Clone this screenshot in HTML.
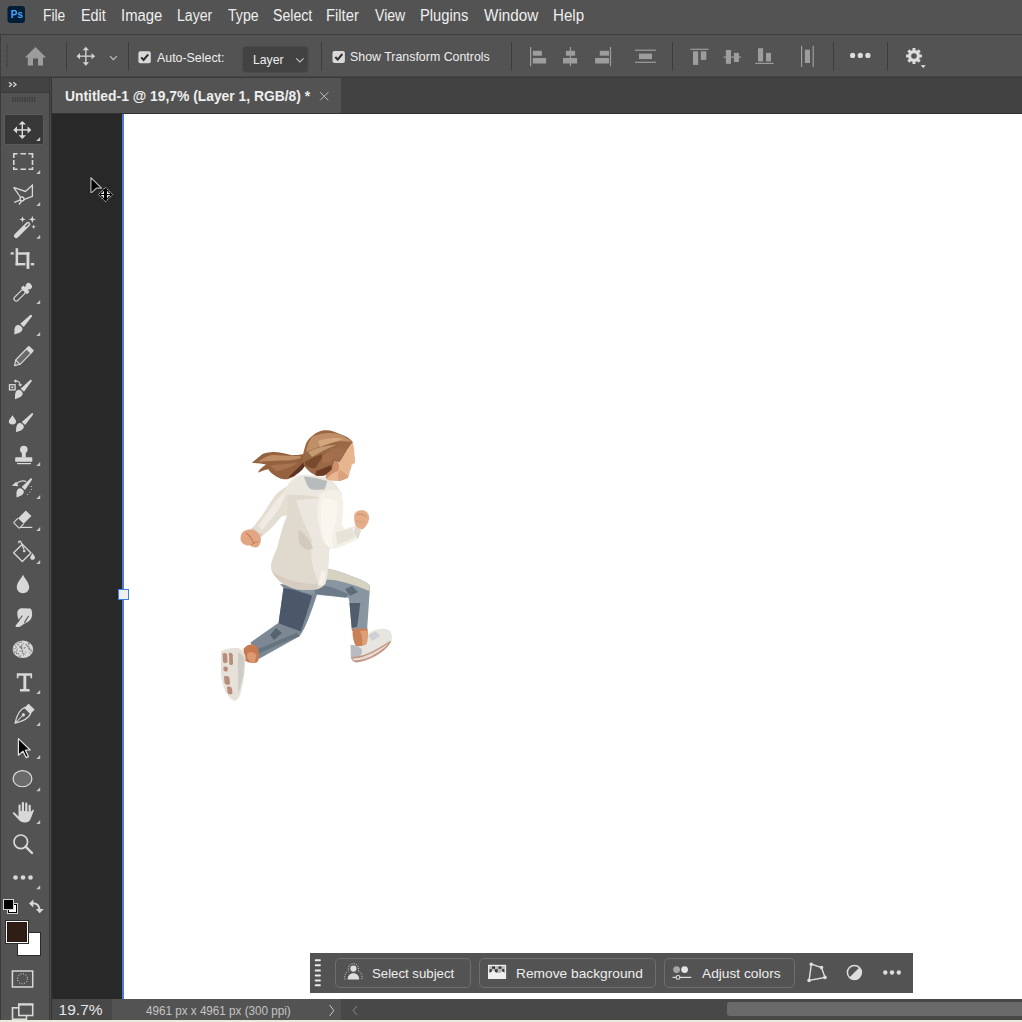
<!DOCTYPE html>
<html><head><meta charset="utf-8">
<style>
*{margin:0;padding:0;box-sizing:border-box}
html,body{width:1022px;height:1022px;overflow:hidden;background:#535353;font-family:"Liberation Sans",sans-serif}
.a{position:absolute}
.t{position:absolute;white-space:nowrap;color:#e8e8e8;line-height:1}
.t{transform-origin:0 0}
</style></head><body>
<!-- menu bar -->
<div class="a" style="left:0;top:0;width:1022px;height:34px;background:#535353"></div>
<div class="a" style="left:0;top:34px;width:1022px;height:1px;background:#3e3e3e"></div>
<!-- options bar -->
<div class="a" style="left:0;top:35px;width:1022px;height:42px;background:#535353"></div>
<div class="a" style="left:0;top:35px;width:1px;height:42px;background:#3e3e3e"></div>
<div class="a" style="left:0;top:76px;width:1022px;height:1px;background:#474747"></div><div class="a" style="left:0;top:77px;width:1022px;height:1px;background:#393939"></div>
<!-- tools panel -->
<div class="a" style="left:0;top:78px;width:49px;height:942px;background:#535353"></div>
<div class="a" style="left:1px;top:78px;width:48px;height:14px;background:#434343"></div>
<div class="a" style="left:1px;top:92px;width:48px;height:1px;background:#3a3a3a"></div>
<div class="a" style="left:0;top:78px;width:1px;height:942px;background:#3a3a3a"></div>
<div class="a" style="left:49px;top:78px;width:1px;height:942px;background:#3a3a3a"></div><div class="a" style="left:50px;top:78px;width:1px;height:942px;background:#494949"></div><div class="a" style="left:51px;top:78px;width:1px;height:942px;background:#343434"></div>
<!-- move tool selected -->
<div class="a" style="left:4px;top:114px;width:40px;height:31px;background:#383838;border:1px solid #5a5a5a;border-radius:2px"></div>
<!-- tab bar -->
<div class="a" style="left:52px;top:78px;width:970px;height:35px;background:#424242"></div>
<div class="a" style="left:52px;top:78px;width:289px;height:35px;background:#535353"></div>
<div class="a" style="left:52px;top:113px;width:970px;height:1px;background:#323232"></div>
<!-- pasteboard + canvas -->
<div class="a" style="left:52px;top:114px;width:970px;height:885px;background:#282828"></div>
<div class="a" style="left:124px;top:114px;width:898px;height:885px;background:#ffffff"></div>
<div class="a" style="left:122px;top:114px;width:2px;height:885px;background:#4a7bd6"></div>
<div class="a" style="left:118px;top:589px;width:11px;height:11px;background:#efefef;border:1.5px solid #3f7ee8"></div>
<!-- status bar -->
<div class="a" style="left:52px;top:999px;width:970px;height:21px;background:#535353"></div>
<div class="a" style="left:52px;top:999px;width:60px;height:21px;background:#484848"></div>
<div class="a" style="left:341px;top:999px;width:681px;height:21px;background:#484848"></div>
<div class="a" style="left:727px;top:1002px;width:305px;height:14px;background:#6a6a6a;border-radius:3px"></div>
<div class="a" style="left:0;top:1020px;width:1022px;height:2px;background:#e9ecdc"></div>
<!-- floating taskbar -->
<div class="a" style="left:310px;top:953px;width:603px;height:40px;background:#535353"></div>
<div class="a" style="left:335px;top:958px;width:136px;height:30px;border:1px solid #6e6e6e;border-radius:5px"></div>
<div class="a" style="left:479px;top:958px;width:177px;height:30px;border:1px solid #6e6e6e;border-radius:5px"></div>
<div class="a" style="left:664px;top:958px;width:131px;height:30px;border:1px solid #6e6e6e;border-radius:5px"></div>


<svg class="a" style="left:0;top:0" width="1022" height="1022" viewBox="0 0 1022 1022">
<!-- Ps logo -->
<rect x="7.5" y="6" width="17.5" height="17" rx="3.2" fill="#001e36"/>
<text x="10.8" y="17.9" font-family="Liberation Sans" font-weight="bold" font-size="10" fill="#4aa6f8">Ps</text>
<!-- options grip -->
<line x1="7" y1="44" x2="7" y2="67.5" stroke="#3c3c3c" stroke-width="1.3" stroke-dasharray="1.4 1.1"/>
<!-- home -->
<path d="M25 57.5 L35.5 47 L46 57.5 Z M27.8 57 H43 V65.4 H38 V58.5 H33 V65.4 H27.8 Z" fill="#9c9c9c"/>
<!-- separators -->
<g stroke="#3d3d3d" stroke-width="1">
<line x1="66.5" y1="42" x2="66.5" y2="71"/>
<line x1="128.5" y1="42" x2="128.5" y2="71"/>
<line x1="321.5" y1="42" x2="321.5" y2="71"/>
<line x1="511.5" y1="42" x2="511.5" y2="71"/>
<line x1="672.5" y1="42" x2="672.5" y2="71"/>
<line x1="833.5" y1="42" x2="833.5" y2="71"/>
<line x1="887.5" y1="42" x2="887.5" y2="71"/>
</g>
<!-- move icon options -->
<g fill="#d4d4d4" stroke="none">
<rect x="85.2" y="49" width="1.3" height="14.5"/>
<rect x="79" y="55.5" width="14.5" height="1.3"/>
<path d="M85.85 46.7 L89 50.2 H82.7 Z M85.85 65.8 L89 62.3 H82.7 Z M76.5 56.15 L80 53 V59.3 Z M95.1 56.15 L91.6 53 V59.3 Z"/>
</g>
<polyline points="110,56.2 113.4,59.6 116.8,56.2" fill="none" stroke="#c4c4c4" stroke-width="1.1"/>
<!-- checkboxes -->
<rect x="138.4" y="51.3" width="12.4" height="12" rx="2" fill="#d9d9d9"/>
<polyline points="141.2,57.4 143.6,60 148.2,54.4" fill="none" stroke="#2d2d2d" stroke-width="2"/>
<rect x="332.5" y="50.9" width="12.4" height="12" rx="2" fill="#d9d9d9"/>
<polyline points="335.3,57 337.7,59.6 342.3,54" fill="none" stroke="#2d2d2d" stroke-width="2"/>
<!-- dropdown -->
<rect x="242.6" y="46.4" width="65.4" height="25.8" rx="3" fill="#424242" stroke="#4b4b4b" stroke-width="1"/>
<polyline points="296.2,58.4 299.9,61.9 303.6,58.4" fill="none" stroke="#c8c8c8" stroke-width="1.1"/>
<!-- align icons -->
<g fill="#9d9d9d">
<rect x="530" y="47" width="1.2" height="19.2"/><rect x="532.8" y="50.8" width="9.1" height="4.9"/><rect x="532.8" y="58" width="13.3" height="5.5"/>
<rect x="569.8" y="47" width="1.2" height="19.2"/><rect x="565.9" y="50.8" width="9.2" height="4.9"/><rect x="563" y="58" width="14.1" height="5.5"/>
<rect x="609.9" y="47" width="1.2" height="19.2"/><rect x="599.8" y="50.8" width="9.2" height="4.9"/><rect x="595.1" y="58" width="13.9" height="5.5"/>
<rect x="635" y="49.6" width="20.9" height="1.2"/><rect x="635" y="61.7" width="20.9" height="1.2"/><rect x="639" y="53.6" width="13" height="5.5"/>
<rect x="690.4" y="48.7" width="18" height="1.2"/><rect x="693" y="51.3" width="5.2" height="13.6"/><rect x="700.8" y="51.3" width="5.5" height="8.6"/>
<rect x="723.5" y="56.5" width="17.7" height="1.2"/><rect x="725.9" y="50" width="5.1" height="13.8"/><rect x="733.9" y="52.9" width="5" height="9.1"/>
<rect x="755.3" y="62.8" width="18.3" height="1.2"/><rect x="758" y="48.2" width="5.1" height="13.3"/><rect x="766" y="52.9" width="5" height="8.6"/>
<rect x="801" y="45.8" width="1.2" height="21.2"/><rect x="812.6" y="45.8" width="1.2" height="21.2"/><rect x="804.9" y="49.7" width="5.1" height="13.3"/>
</g>
<!-- more dots -->
<g fill="#dcdcdc"><circle cx="852.6" cy="55.4" r="2.6"/><circle cx="860.3" cy="55.4" r="2.6"/><circle cx="867.9" cy="55.4" r="2.6"/></g>
<!-- gear -->
<g transform="translate(914 56)" fill="#dcdcdc">
<path id="gear" d="M-1.45 -5.82 L-1.55 -7.95 L1.55 -7.95 L1.45 -5.82 L3.09 -5.14 L4.53 -6.72 L6.72 -4.53 L5.14 -3.09 L5.82 -1.45 L7.95 -1.55 L7.95 1.55 L5.82 1.45 L5.14 3.09 L6.72 4.53 L4.53 6.72 L3.09 5.14 L1.45 5.82 L1.55 7.95 L-1.55 7.95 L-1.45 5.82 L-3.09 5.14 L-4.53 6.72 L-6.72 4.53 L-5.14 3.09 L-5.82 1.45 L-7.95 1.55 L-7.95 -1.55 L-5.82 -1.45 L-5.14 -3.09 L-6.72 -4.53 L-4.53 -6.72 L-3.09 -5.14 Z M0 -2.8 A2.8 2.8 0 1 0 0 2.8 A2.8 2.8 0 1 0 0 -2.8 Z" fill-rule="evenodd"/>
</g>
<path d="M920.7 65.2 H925.7 L923.2 68 Z" fill="#e8e8e8"/>
<!-- tab close -->
<g stroke="#bdbdbd" stroke-width="1"><line x1="320.2" y1="92.2" x2="328.3" y2="100.3"/><line x1="328.3" y1="92.2" x2="320.2" y2="100.3"/></g>
<!-- status chevrons -->
<polyline points="329.6,1005 333.8,1010.5 329.6,1016" fill="none" stroke="#c8c8c8" stroke-width="1"/>
<polyline points="357,1006 353,1010.5 357,1015" fill="none" stroke="#8a8a8a" stroke-width="1"/>
<!-- taskbar grip -->
<g fill="#ececec">
<rect x="314.7" y="959.2" width="6.2" height="2" rx="1"/><rect x="314.7" y="964.3" width="6.2" height="2" rx="1"/><rect x="314.7" y="969.4" width="6.2" height="2" rx="1"/>
<rect x="314.7" y="974.5" width="6.2" height="2" rx="1"/><rect x="314.7" y="979.6" width="6.2" height="2" rx="1"/><rect x="314.7" y="984.2" width="6.2" height="2" rx="1"/>
</g>
</svg>


<svg class="a" style="left:0;top:0" width="1022" height="1022" viewBox="0 0 1022 1022">
<!-- header chevrons -->
<g fill="none" stroke="#d4d4d4" stroke-width="1.3"><polyline points="9,82.3 11.7,84.5 9,86.7"/><polyline points="13.3,82.3 16,84.5 13.3,86.7"/></g>
<!-- grip -->
<line x1="12" y1="99.5" x2="36.5" y2="99.5" stroke="#3f3f3f" stroke-width="5" stroke-dasharray="1.3 1.15"/>
<!-- move icon tool -->
<g fill="#dadada">
<rect x="21.6" y="123.5" width="1.4" height="13"/>
<rect x="16" y="129.2" width="13" height="1.4"/>
<path d="M22.3 120.9 L26 124.6 H18.6 Z M22.3 138.9 L26 135.2 H18.6 Z M13.3 129.9 L17 126.2 V133.6 Z M31.3 129.9 L27.6 126.2 V133.6 Z"/>
</g>
<!-- corner triangles -->
<g fill="#c6c6c6">
<path d="M40.2 137 V141 H36.2 Z"/>
<path d="M40.2 170 V174 H36.2 Z"/>
<path d="M40.2 202 V206 H36.2 Z"/>
<path d="M40.2 234.8 V238.8 H36.2 Z"/>
<path d="M40.2 300 V304 H36.2 Z"/>
<path d="M40.2 332 V336 H36.2 Z"/>
<path d="M40.2 462 V466 H36.2 Z"/>
<path d="M40.2 495 V499 H36.2 Z"/>
<path d="M40.2 527 V531 H36.2 Z"/>
<path d="M40.2 560 V564 H36.2 Z"/>
<path d="M40.2 690 V694 H36.2 Z"/>
<path d="M40.2 722 V726 H36.2 Z"/>
<path d="M40.2 755 V759 H36.2 Z"/>
<path d="M40.2 787.2 V791.2 H36.2 Z"/>
<path d="M40.2 820 V824 H36.2 Z"/>
<path d="M40.2 885.2 V889.2 H36.2 Z"/>
</g>
<g stroke="#d8d8d8" fill="none" stroke-width="1.6">
<!-- marquee -->
<path d="M13.8 158 V153.8 H17.6 M20.5 153.8 H26 M28.4 153.8 H32.5 V158 M32.5 160 V165 M32.5 167 V169.2 H28.4 M26 169.2 H20.5 M17.6 169.2 H13.8 V167 M13.8 165 V160"/>
<!-- lasso -->
<path d="M13.6 187.4 L25.4 191.4 L32.4 185.2 V196.3 L23.8 199.6 M13.6 187.4 L20.3 197 M20.6 199.8 L14.2 202.3 M21.5 201 L19 204.5" stroke-width="1.3"/>
<circle cx="22" cy="199" r="2" stroke-width="1.3"/>
</g>
<!-- magic wand -->
<g fill="#d8d8d8">
<line x1="16.2" y1="235.8" x2="28" y2="224.2" stroke="#d8d8d8" stroke-width="4.6" stroke-linecap="round"/>
<line x1="25.8" y1="226.4" x2="28.2" y2="224" stroke="#535353" stroke-width="1.3" stroke-linecap="round"/>
<path d="M22.5 216.3 L23.3 218.6 L25.6 219.4 L23.3 220.2 L22.5 222.5 L21.7 220.2 L19.4 219.4 L21.7 218.6 Z"/>
<path d="M32.3 215.8 L33.2 218.5 L35.9 219.4 L33.2 220.3 L32.3 223 L31.4 220.3 L28.7 219.4 L31.4 218.5 Z"/>
<path d="M33.6 224.6 L34.2 226.2 L35.8 226.8 L34.2 227.4 L33.6 229 L33 227.4 L31.4 226.8 L33 226.2 Z"/>
</g>
<!-- crop -->
<g fill="#d8d8d8">
<rect x="10.6" y="252.3" width="3.2" height="2.2"/>
<rect x="15.6" y="248.2" width="2.5" height="17.2"/>
<rect x="15.6" y="263" width="9.8" height="2.4"/>
<rect x="18.1" y="252.3" width="11.3" height="2.4"/>
<rect x="26.5" y="252.3" width="2.9" height="16.6"/>
<rect x="30.8" y="263" width="3.4" height="2.4"/>
</g>
<!-- eyedropper -->
<g transform="translate(22.6 292.4) rotate(-45)" fill="#d8d8d8">
<rect x="-11.2" y="-2.3" width="13.8" height="4.6" rx="2.3" fill="none" stroke="#d8d8d8" stroke-width="1.2"/>
<rect x="1.8" y="-4.4" width="3.6" height="8.8" rx="0.5"/>
<rect x="4.8" y="-2.2" width="2.5" height="4.4"/>
<rect x="6.2" y="-3.3" width="5.4" height="6.6" rx="3"/>
</g>
<!-- brush -->
<g transform="translate(22.8 324.6) rotate(-47)" fill="#d8d8d8">
<path d="M-13 0.6 C-10.5 -1.5 -8.5 -4.2 -5.8 -4.2 C-3.6 -4.2 -2.4 -2.6 -2.4 -0.2 C-2.4 2.4 -3.8 3.6 -5.8 3.6 C-8.5 3.6 -10.5 1.8 -13 0.6 Z"/>
<path d="M-1.2 -2.4 L12.2 -1.1 C13.4 -1 13.4 1 12.2 1.1 L-1.2 2.4 Z"/>
</g>
<!-- pencil -->
<g transform="translate(23 356.9) rotate(-46) scale(0.88)">
<path d="M-13.8 0 L-8.3 -3.5 H9.5 V3.5 H-8.3 Z" fill="#6a6a6a" stroke="#d8d8d8" stroke-width="1.3" stroke-linejoin="round"/>
<line x1="-8.3" y1="-3.5" x2="-8.3" y2="3.5" stroke="#d8d8d8" stroke-width="1.2"/>
<rect x="9" y="-4.2" width="4.8" height="8.4" rx="1" fill="#d8d8d8"/>
</g>
<!-- color replacement -->
<g>
<rect x="9.5" y="384.7" width="5.6" height="5.2" fill="none" stroke="#d8d8d8" stroke-width="1.3"/>
<rect x="11.3" y="386.4" width="2" height="1.8" fill="#d8d8d8"/>
<path d="M15 382 C16.5 380.3 19.5 380.8 20.2 384.8" fill="none" stroke="#d8d8d8" stroke-width="1.2"/>
<path d="M18.2 384.2 H22.2 L20.2 386.8 Z" fill="#d8d8d8"/>
<path d="M13.6 381 L16.2 379.2 L16.2 382.8 Z" fill="#d8d8d8"/>
</g>
<g transform="translate(23 389.4) rotate(-48)" fill="#d8d8d8">
<path d="M-12.6 0.6 C-10.2 -1.4 -8.2 -3.9 -5.6 -3.9 C-3.5 -3.9 -2.3 -2.4 -2.3 -0.2 C-2.3 2.2 -3.6 3.4 -5.6 3.4 C-8.2 3.4 -10.2 1.7 -12.6 0.6 Z"/>
<path d="M-1.1 -2.3 L11.8 -1 C13 -0.9 13 0.9 11.8 1 L-1.1 2.3 Z"/>
</g>
<!-- mixer brush -->
<path d="M12.5 415.3 C11.5 417.5 8.8 419.5 8.8 421.6 C8.8 423.5 10.4 424.6 12.45 424.6 C14.5 424.6 16.1 423.5 16.1 421.6 C16.1 419.5 13.5 417.5 12.5 415.3 Z" fill="#d8d8d8"/>
<g transform="translate(24.2 422.7) rotate(-47)" fill="#d8d8d8">
<path d="M-12.6 0.6 C-10.2 -1.4 -8.2 -3.9 -5.6 -3.9 C-3.5 -3.9 -2.3 -2.4 -2.3 -0.2 C-2.3 2.2 -3.6 3.4 -5.6 3.4 C-8.2 3.4 -10.2 1.7 -12.6 0.6 Z"/>
<path d="M-1.1 -2.3 L11.8 -1 C13 -0.9 13 0.9 11.8 1 L-1.1 2.3 Z"/>
</g>
<!-- stamp -->
<g fill="#d8d8d8">
<circle cx="23.8" cy="449.6" r="3.8"/>
<rect x="21.8" y="451" width="4" height="6.5"/>
<path d="M16 457.2 H31.5 Q32.3 457.2 32.3 458 V461.8 H15.2 V458 Q15.2 457.2 16 457.2 Z"/>
<rect x="17" y="463" width="14" height="1.2"/>
</g>
<!-- history brush -->
<g fill="#d8d8d8">
<path d="M11.8 485.8 L16.3 481.8 L18.5 486.2 Z"/>
<path d="M16.5 483.5 C19.5 481 23.5 480.5 26.3 481.5" fill="none" stroke="#d8d8d8" stroke-width="1.2"/>
<circle cx="31.2" cy="486.5" r="0.6"/><circle cx="31.5" cy="489.5" r="0.6"/><circle cx="30" cy="492" r="0.6"/><circle cx="27.5" cy="494.5" r="0.6"/>
</g>
<g transform="translate(24 487.7) rotate(-50)" fill="#d8d8d8">
<path d="M-12.2 0.6 C-10 -1.4 -8 -3.8 -5.5 -3.8 C-3.4 -3.8 -2.2 -2.4 -2.2 -0.2 C-2.2 2.2 -3.5 3.3 -5.5 3.3 C-8 3.3 -10 1.7 -12.2 0.6 Z"/>
<path d="M-1 -2.2 L11.2 -1 C12.4 -0.9 12.4 0.9 11.2 1 L-1 2.2 Z"/>
</g>
<!-- eraser -->
<g transform="translate(22.6 519.3) rotate(-45) scale(0.87)">
<rect x="-2.8" y="-4.6" width="12.6" height="9.2" fill="#d8d8d8"/>
<path d="M-2.8 -4.6 H-9.3 Q-10 -4.6 -10 -3.9 V3.9 Q-10 4.6 -9.3 4.6 H-2.8" fill="none" stroke="#d8d8d8" stroke-width="1.3"/>
</g>
<rect x="20.5" y="526.8" width="11.8" height="1.2" fill="#d8d8d8"/>
<!-- bucket -->
<g>
<path d="M13.6 552.8 L22.3 544.3 L31 553 L22.3 561.5 Z" fill="none" stroke="#d8d8d8" stroke-width="1.3" stroke-linejoin="round"/>
<path d="M19.4 543.2 C17.5 541.5 20 540.3 21 542 L24 549.5" fill="none" stroke="#d8d8d8" stroke-width="1.2"/>
<circle cx="24.2" cy="551" r="1.3" fill="#d8d8d8"/>
<path d="M32.6 553 C32 555 30.2 556 30.2 557.4 C30.2 558.8 31.3 559.7 32.6 559.7 C33.9 559.7 35 558.8 35 557.4 C35 556 33.2 555 32.6 553 Z" fill="#d8d8d8"/>
</g>
<!-- blur -->
<path d="M23 574.7 C21.5 578 16.8 582.5 16.8 587.1 C16.8 590.8 19.5 593.3 23 593.3 C26.5 593.3 29.2 590.8 29.2 587.1 C29.2 582.5 24.5 578 23 574.7 Z" fill="#d8d8d8"/>
<!-- smudge -->
<path d="M17.3 613 C17.3 610 19.5 608.3 22 608.3 L30.5 608.6 C31.7 609.5 32.1 611.5 32.1 614.5 C32.1 618.5 29.5 621.8 25.5 623 L20.2 626.4 C19.2 627.2 16.5 627.3 15.6 626.5 C15.3 626 15.5 625.5 16 625 L19.5 620.8 C18 619 17.3 616 17.3 613 Z" fill="#d8d8d8"/>
<path d="M22 616 L18.6 620.8 M28.4 616.3 L24.6 622.4" stroke="#535353" stroke-width="1.1" stroke-linecap="round"/>
<!-- sponge -->
<ellipse cx="22.9" cy="649.3" rx="10.2" ry="8.8" fill="#d8d8d8"/>
<g fill="#6a6a6a"><circle cx="23.4" cy="655.0" r="0.55"/><circle cx="18.0" cy="653.7" r="0.55"/><circle cx="21.2" cy="647.9" r="0.55"/><circle cx="31.3" cy="649.9" r="0.55"/><circle cx="22.6" cy="653.1" r="0.55"/><circle cx="29.2" cy="649.2" r="0.55"/><circle cx="26.2" cy="644.7" r="0.55"/><circle cx="20.6" cy="647.0" r="0.55"/><circle cx="17.2" cy="643.9" r="0.55"/><circle cx="15.1" cy="648.3" r="0.55"/><circle cx="21.8" cy="647.6" r="0.55"/><circle cx="23.3" cy="643.3" r="0.55"/><circle cx="22.4" cy="650.6" r="0.55"/><circle cx="27.1" cy="645.3" r="0.55"/><circle cx="21.2" cy="642.1" r="0.55"/><circle cx="20.9" cy="642.0" r="0.55"/><circle cx="16.4" cy="653.6" r="0.55"/><circle cx="14.5" cy="651.9" r="0.55"/><circle cx="25.0" cy="647.6" r="0.55"/><circle cx="25.7" cy="652.0" r="0.55"/><circle cx="28.8" cy="648.2" r="0.55"/><circle cx="19.4" cy="646.2" r="0.55"/><circle cx="17.2" cy="649.1" r="0.55"/><circle cx="18.7" cy="654.1" r="0.55"/><circle cx="15.3" cy="645.6" r="0.55"/><circle cx="19.2" cy="642.5" r="0.55"/><circle cx="28.6" cy="643.2" r="0.55"/><circle cx="21.1" cy="646.5" r="0.55"/><circle cx="28.7" cy="643.4" r="0.55"/><circle cx="28.6" cy="646.0" r="0.55"/><circle cx="21.9" cy="645.8" r="0.55"/><circle cx="26.3" cy="644.2" r="0.55"/><circle cx="22.4" cy="651.2" r="0.55"/><circle cx="28.5" cy="643.1" r="0.55"/><circle cx="29.9" cy="653.0" r="0.55"/><circle cx="19.9" cy="650.9" r="0.55"/><circle cx="20.7" cy="655.9" r="0.55"/><circle cx="24.2" cy="648.1" r="0.55"/><circle cx="21.4" cy="648.2" r="0.55"/><circle cx="21.9" cy="644.9" r="0.55"/><circle cx="29.6" cy="644.0" r="0.55"/><circle cx="13.7" cy="649.0" r="0.55"/><circle cx="22.0" cy="651.3" r="0.55"/><circle cx="21.6" cy="648.5" r="0.55"/><circle cx="24.8" cy="654.0" r="0.55"/><circle cx="20.1" cy="647.3" r="0.55"/><circle cx="31.2" cy="651.2" r="0.55"/><circle cx="19.4" cy="656.3" r="0.55"/><circle cx="27.4" cy="646.4" r="0.55"/><circle cx="16.5" cy="650.7" r="0.55"/><circle cx="18.5" cy="644.6" r="0.55"/><circle cx="16.2" cy="647.1" r="0.55"/><circle cx="29.0" cy="647.3" r="0.55"/><circle cx="15.8" cy="652.1" r="0.55"/><circle cx="23.3" cy="653.6" r="0.55"/><circle cx="29.5" cy="648.5" r="0.55"/><circle cx="22.0" cy="649.0" r="0.55"/><circle cx="16.9" cy="652.3" r="0.55"/><circle cx="30.1" cy="650.1" r="0.55"/><circle cx="21.4" cy="647.9" r="0.55"/></g>
<!-- type -->
<path d="M16.8 673.3 H32.1 V678.3 H30.4 V675.7 H26.3 V689 H29.6 V691.4 H20 V689 H23.4 V675.7 H18.5 V678.3 H16.8 Z" fill="#d8d8d8"/>
<!-- pen -->
<g transform="translate(23.4 714.8) rotate(-45)">
<rect x="6" y="-4.3" width="5.6" height="8.6" rx="0.5" fill="#d8d8d8"/>
<path d="M6 -4.3 C1.5 -6.2 -4 -5 -11.8 0 C-4 5 1.5 6.2 6 4.3 Z" fill="none" stroke="#d8d8d8" stroke-width="1.3" stroke-linejoin="round"/>
<circle cx="0" cy="0" r="1.6" fill="#d8d8d8"/>
<line x1="-11" y1="0" x2="-1" y2="0" stroke="#d8d8d8" stroke-width="1"/>
</g>
<!-- path select -->
<path d="M18.4 738.6 L30.2 750 L25.4 750.2 L28.4 756.6 L26.1 757.6 L23 751.2 L18.4 755.2 Z" fill="#000" stroke="#e2e2e2" stroke-width="1.2" stroke-linejoin="round"/>
<!-- ellipse -->
<ellipse cx="22.5" cy="778.65" rx="9.4" ry="8.1" fill="#6b6b6b" stroke="#e0e0e0" stroke-width="1.2"/>
<!-- hand -->
<path d="M18.5 816.5 V805.5 C18.5 804.2 20.6 804.2 20.6 805.5 V811 H21.8 V803 C21.8 801.6 24 801.6 24 803 V811 H25.2 V803.6 C25.2 802.3 27.4 802.3 27.4 803.6 V811.5 H28.6 V805.8 C28.6 804.5 30.8 804.5 30.8 805.8 V812 L33 809.5 C33.8 809 34 810.5 33.5 811.5 L31 818 C30 821 28 822.5 25 822.5 C22 822.5 20 821.5 18.5 819.5 L13 813.8 C12.2 812.8 13.5 811.8 14.5 812.5 Z" fill="#d8d8d8"/>
<!-- zoom -->
<circle cx="20.8" cy="841.8" r="6.8" fill="none" stroke="#d8d8d8" stroke-width="1.7"/>
<line x1="25.6" y1="846.6" x2="32" y2="853" stroke="#d8d8d8" stroke-width="2.4" stroke-linecap="round"/>
<!-- more -->
<g fill="#d8d8d8"><circle cx="15.5" cy="877.5" r="2.3"/><circle cx="23" cy="877.5" r="2.3"/><circle cx="30.5" cy="877.5" r="2.3"/></g>
<!-- default colors -->
<rect x="7" y="903" width="11" height="11" fill="#cfcfcf"/>
<rect x="8" y="904" width="9" height="9" fill="#000"/>
<rect x="9" y="905" width="7" height="7" fill="#fff"/>
<rect x="3" y="899" width="11" height="11" fill="#cfcfcf"/>
<rect x="4" y="900" width="9" height="9" fill="#000"/>
<!-- swap -->
<path d="M32 903.3 C36.5 903 39 905.5 39.6 909.5" fill="none" stroke="#d8d8d8" stroke-width="2"/>
<path d="M29 903.5 L33.3 899.5 V907.5 Z M39.7 913.3 L35.7 909 H43.7 Z" fill="#d8d8d8"/>
<!-- fg/bg -->
<rect x="17" y="932" width="24" height="24" fill="#2a2a2a"/><rect x="18" y="933" width="22" height="22" fill="#fff"/>
<rect x="5" y="920" width="24" height="24" fill="#2a2a2a"/>
<rect x="6" y="921" width="22" height="22" fill="#ffffff"/>
<rect x="7" y="922" width="20" height="20" fill="#1c1410"/>
<rect x="7.6" y="922.6" width="18.8" height="18.8" fill="#2f1e16"/>
<!-- quick mask -->
<rect x="12.4" y="971" width="20.3" height="16" fill="none" stroke="#d8d8d8" stroke-width="1.5"/>
<circle cx="22.5" cy="978.8" r="5" fill="none" stroke="#e8e8e8" stroke-width="1" stroke-dasharray="1 1.6"/>
<!-- screen mode -->
<rect x="12.5" y="1007.8" width="14" height="11.4" fill="none" stroke="#d8d8d8" stroke-width="1.6"/>
<rect x="18.8" y="1004.3" width="13.9" height="11.2" fill="#535353" stroke="#d8d8d8" stroke-width="1.6"/>
<rect x="18" y="1003.5" width="15.3" height="2" fill="#d8d8d8"/>

<!-- taskbar icons -->
<g fill="#dedede">
<circle cx="353.4" cy="968.6" r="3.1"/>
<path d="M347.6 979.6 C347.6 975.5 350 973.2 353.4 973.2 C356.8 973.2 359.2 975.5 359.2 979.6 Z"/>
</g>
<path d="M345 979.5 C344 975 346 972 348.5 971 C347.5 967 349.5 963.8 353.4 963.6 C357.3 963.8 359.3 967 358.3 971 C360.8 972 362.8 975 361.8 979.5" fill="none" stroke="#dedede" stroke-width="1" stroke-dasharray="0.9 1.4"/>
<rect x="488" y="964.8" width="18.1" height="14.2" fill="#eeeeee"/>
<rect x="489.2" y="966.2" width="15.7" height="6.8" fill="#b8b8b8"/>
<g fill="#3a3a3a"><rect x="492" y="966.4" width="3" height="2.4"/><rect x="498.5" y="966.4" width="3" height="2.4"/><rect x="489.5" y="969.2" width="2.3" height="3"/><rect x="495" y="969.2" width="2.6" height="3"/><rect x="502" y="969.2" width="2.3" height="3"/></g>
<path d="M489 978.2 V974 L493.2 970.3 L498.4 974.8 L502.5 971.2 L505 973.5 V978.2 Z" fill="#eeeeee"/>
<circle cx="676.6" cy="969.6" r="3.4" fill="#a6a6a6"/>
<circle cx="684.6" cy="969.6" r="3.4" fill="#e4e4e4"/>
<line x1="672.6" y1="977.4" x2="691.3" y2="977.4" stroke="#dedede" stroke-width="1.2"/>
<circle cx="678" cy="977.4" r="1.9" fill="#535353" stroke="#dedede" stroke-width="1.1"/>
<path d="M811.3 964.2 L821.5 967.5 L825 977.4 L809.1 980.4 Z" fill="none" stroke="#dedede" stroke-width="1.4"/>
<g fill="#dedede"><circle cx="811.3" cy="964.2" r="1.8"/><circle cx="821.5" cy="967.5" r="1.8"/><circle cx="825" cy="977.4" r="1.8"/><circle cx="809.1" cy="980.4" r="1.8"/></g>
<circle cx="854.4" cy="972.5" r="7" fill="none" stroke="#dedede" stroke-width="1.5"/>
<path d="M859.35 967.55 A7 7 0 0 1 849.45 977.45 Z" fill="#dedede"/>
<g fill="#dedede"><circle cx="885.3" cy="972.5" r="2.2"/><circle cx="892" cy="972.5" r="2.2"/><circle cx="898.8" cy="972.5" r="2.2"/></g>

<!-- cursor -->
<path d="M90.9 177.6 L101.6 188.2 H96.3 L91.9 192.4 H90.9 Z" fill="#000" stroke="#b0b0b0" stroke-width="1.2" stroke-linejoin="round"/>
<path d="M105.5 187.3 L112.7 194.5 L105.5 201.7 L98.3 194.5 Z" fill="#000" stroke="#dadada" stroke-width="1" stroke-dasharray="1.6 0.8"/>
<g stroke="#e6e6e6" stroke-width="1.2" fill="none"><path d="M103.4 191.3 V193.4 H101.2 M107.6 191.3 V193.4 H109.8 M103.4 197.7 V195.6 H101.2 M107.6 197.7 V195.6 H109.8"/></g>
</svg>


<svg class="a" style="left:0;top:0" width="1022" height="1022" viewBox="0 0 1022 1022">
<!-- ponytail -->
<path d="M304 454 C299 455 296 455 292 455.2 C284 453 276 451.5 270.8 452.3 C267 452.8 264 453.2 262.6 454 C259 457 255 460 252 462.9 C257 463 262 463.5 266.1 464.6 C262 467 259 470 257.9 472.8 C262 471 265 469.5 268.5 469.3 C270 472 272 474 274.4 475.2 C277 477 280 479 283.7 479.3 C288 479.5 291 478 294.3 476.4 C298 473 301 469 304 465 Z" fill="#95623f"/>
<path d="M300 456 C292 456.5 282 455 272 455 C266 456 262 459 258 462 C266 461 276 460.5 288 460.5 C294 460 298 459 301 458 Z" fill="#bd8d66"/>
<path d="M270 466 C278 464 288 464 298 463 C292 467 284 470 276 471 Z" fill="#a87450"/>
<path d="M304 462 C299 467 294 472 288 477.5 C293 477 298 474 302 470 L305 466 Z" fill="#5c3220"/>
<!-- back arm sleeve -->
<path d="M288 486 C282 489 278 492 274.7 496 C270 503 266 509 262.4 515.2 L252.8 527.5 L250 530.3 C252 534 256 536 261 537.1 L270.6 528.9 L281.6 516.6 L288 515 Z" fill="#e3ddd2"/>
<path d="M286 490 C280 495 274 503 268 512 L258 526 L262 530 L274 516 C280 508 284 500 286 494 Z" fill="#efebe2"/>
<path d="M252.8 527.5 L250 530.3 C252 534 256 536 261 537.1 L263 534.5 C259 533 255 530.5 253.5 527.5 Z" fill="#d8d1c6"/>
<!-- back hand -->
<path d="M244 531 C241 533 240 537 240.8 540.5 C242 544 246 546 250 545.5 C252 547 255 548 257.5 547 C260 545.5 261 542 261 538.5 C260 534 257 531 253 529.8 C249.5 529 246.5 529.5 244 531 Z" fill="#e3a682"/>
<path d="M246 533 C249 535 252 539 254 544" fill="none" stroke="#c27c5a" stroke-width="1.1"/>
<path d="M251 545 C253 543 256 542 258.5 542" fill="none" stroke="#c27c5a" stroke-width="0.9"/>
<!-- back leg -->
<path d="M280 584 L283.5 588 L278.6 622.8 L250.5 642.4 L257.8 659.6 L299.5 636.3 C306 628 311 612 316.6 596 L318 588 Z" fill="#7c8995"/>
<path d="M283.5 588 L278.6 622.8 C284 626 292 628 300.7 631.4 C304 622 308 610 312 596 C303 592 292 589 283.5 588 Z" fill="#4a586a"/>
<path d="M258 654 C270 648 285 642 299.5 636.3 L297 632.5 C285 638 270 644 256 650 Z" fill="#66747f"/>
<path d="M270 635 L276 628 L282 633 L274 640 Z" fill="#56646f"/>
<!-- back ankle -->
<path d="M243.5 649 C247 643.5 254 643.5 257 646.5 C259.5 651 259.5 658 257.5 662 C254 664 248 663 244 660 Z" fill="#c77950"/>
<path d="M247.5 653 C250.5 651 254.5 652 256.5 655.5 L254.5 663 C251 663 248 660 247 657 Z" fill="#dd9a70"/>
<!-- back shoe -->
<path d="M221.1 651 C227 648.5 234 647.5 239.5 648.5 C243 650.5 245.6 654.5 245.6 658.3 L244.4 673 C243 683 241.5 691 239.5 696.3 C237.5 700 235.5 701 233.4 700.6 C229.5 698 226.5 694 224.8 690.2 C222.5 684 221 678 221.1 671.8 C220.8 664 220.6 657 221.1 651 Z" fill="#e6e1d8"/>
<g fill="#b98d7b">
<path d="M222.6 653.5 C224.5 652.5 226.5 652.8 227.2 654.5 L227.5 662 C226 663.5 224 663.5 223 662 Z"/>
<path d="M229 653 C231 652.5 232.5 653.5 232.8 655 L233 664 C232 665.5 230 665.5 229.3 664 Z"/>
<path d="M223.5 667 C225 666 227 666.5 228 668 L227.5 671 C226 672 224 671.5 223.5 670 Z"/>
<path d="M224 676.5 C226 675.5 228.5 676 229.5 678 L230 684 C228.5 685.5 225.5 685 224.5 683 Z"/>
<path d="M227 687 C229 686 231 686.5 232 688.5 L232.5 693.5 C231 695 228.5 694.5 227.5 692.5 Z"/>
</g>
<path d="M238 652 C241.5 654 244 656.5 244.5 659 L243.5 674 C242 682 240 689 238 693 Z" fill="#cfccc6"/>
<!-- front leg -->
<path d="M306 580 C316 574 325 569 326.9 568.6 C334 570 342 572.5 348.4 575.1 C355 577.5 360 579 364.6 581.5 C368 583.5 370 585 370 586.9 L368.9 603 L367 631 L351.9 631 L349.5 603 C349 600 348.7 598.5 348.4 597.7 C338 597 326 595.5 316.1 594.4 L300 592 Z" fill="#8896a2"/>
<path d="M326.9 568.6 C334 570 342 572.5 348.4 575.1 C355 577.5 360 579 364.6 581.5 C368 583.5 370 585 370 586.9 L369 591 C362 588 354 585 345 582.5 C338 580.5 332 579.5 326 579.5 Z" fill="#d7d3c3"/>
<path d="M349.5 603 L360.3 603 C359 612 358.5 620 357 626.7 L351.7 628 Z" fill="#4f5d6c"/>
<path d="M314 584 C326 585 338 589 348.4 594 L346 597.5 C336 596 324 595 315 594 Z" fill="#6d7b88"/>
<path d="M345 589 L352 586 L358 592 L350 596 Z" fill="#5e6c7a"/>
<!-- front ankle -->
<path d="M352.5 628.5 L367.5 628.5 C368.5 636 368.2 642 367 646.1 L356 646.5 C353 641 352.2 635 352.7 630 Z" fill="#c98058"/>
<path d="M360 631 L367.8 630.5 C368.5 636 368.2 642 367 646 L362 646 C363 641 362 636 360 631 Z" fill="#dca078"/>
<!-- front shoe -->
<path d="M350.6 645 C353 644 356 645.5 356 646.1 C360 646.5 364 646 366.7 644 L368.9 633.2 C372 631 376 629 379.7 628.9 C384 628.5 388 629.5 390.4 631 C392 634 392.5 638 391.5 641.8 C387 647 381 652 375.3 656.9 C370 659.5 364 661.5 358.1 662.3 C354 662.5 351 660 350.6 656.9 Z" fill="#e7e5e0"/>
<path d="M350.6 645 C354 644.5 358 646 361 648.5 C363 651 362 655 358 657.5 L351 657 Z" fill="#b8bcc1"/>
<path d="M351 657 C360 657.5 372 653 391 640.5 C390 645 386 649 381 652.5 C374 657 366 660.5 358.1 662.3 C354.5 662.8 351.5 661 351 657 Z" fill="#c3927c"/>
<path d="M352 658.5 C361 658.5 372 654.5 389 643 C385 648 378 653 371 656.5 C365 659 359 660.5 354 660.5 Z" fill="#e3ddd3"/>
<path d="M368 635 L376 631.5 L380 636 L372 641 Z" fill="#cdd0d4"/>
<!-- torso -->
<path d="M288 486 C288 500 288 508 287 515.2 C283 525 280 536 277.5 546.7 C275 553 272.5 558 271.3 563.2 C270.5 566 271 569 272 571.4 C275 577 279 581 283 583.7 C288 586.5 292 588 296.6 589.2 C303 590 310 590 317.2 589.2 C321 588 324 586 325.4 583.7 C327 578 328 572 328.2 565.9 L329.5 546.7 L332 510 L339 490.5 C334 484 326 479 318 477 Z" fill="#e0d9cd"/>
<path d="M272 571.4 C275 577 279 581 283 583.7 C288 586.5 292 588 296.6 589.2 C303 590 310 590 317.2 589.2 L318 584 C306 584 292 582 280 576 Z" fill="#d6cdc0"/>
<path d="M296 500 C300 515 306 528 312 540 C310 555 312 570 320 586 L325.4 583.7 C327 578 328 572 328.2 565.9 L329.5 546.7 L333 520 L320 498 Z" fill="#ece7de"/>
<path d="M298 530 C304 532 310 540 313 548 C307 552 302 548 299 542 Z" fill="#d3cabe"/>
<path d="M318 585 L322 570 L326 573 L323 585 Z" fill="#f6f2ea"/>
<!-- hood -->
<path d="M283.7 495.1 C285 490 287 485 289.6 482.2 C293 478 297 476 300.2 475.2 C304 474.5 308 474.5 310.8 475.2 C316 476 322 476.5 327.2 477.5 C331 479.5 334 482 336.6 485.8 C339 489 341 492 342.5 495.1 C336 498 328 499 318 497 C308 495 298 494 283.7 495.1 Z" fill="#ebe7df"/>
<path d="M303.7 476.4 C311 477 320 478.5 327.2 481 C326.5 484 325.5 487 324.8 489.3 C320 490 315 490 310.8 489.3 C308 487 306.5 484.5 306 482.2 Z" fill="#b7bbbb"/>
<!-- front arm -->
<path d="M339 490.5 C341 494 342.5 498 343.2 501.5 C343.5 510 342.5 518 341.8 524.8 L344.6 528.9 C348 527.5 350.5 526.8 352.8 526.2 L355.5 524.8 C358 526.5 360 528 361 530.3 L358.3 538.5 C354 541 349 543.5 344.6 545.3 C340 547.5 335 548.8 330.9 548.8 C325 546 322 540 320 531.6 C318.5 525 317.5 518 317.2 511.1 C317.5 505 318.5 499 320 494.7 C326 490 333 489 339 490.5 Z" fill="#f3f0e7"/>
<path d="M322 500 C327 498 333 498 337 502 C338 512 336 522 333 532 C331 538 331 543 334 547.5 C329 548 325 545 323 538 C320.5 528 320 512 322 500 Z" fill="#f8f6ef"/>
<path d="M336 532 C341 531 347 530 352 528 L355 537 C349 540 343 543 337 545 Z" fill="#e8e3d8"/>
<path d="M355.5 524.8 C358 526.5 360 528 361 530.3 L358.3 538.5 C356 537 354.5 535 354 532 Z" fill="#e0dacf"/>
<!-- front hand -->
<path d="M354.5 514 C356 510.5 360 509.5 364 510.5 C367.5 511.5 369.5 515 369 519 C368.5 523 366 527 362.5 529.5 C359 529 356 527 355 523.5 C354 520 353.8 517 354.5 514 Z" fill="#e4ae8a"/>
<path d="M357 515 C360 513.5 364 514 366 517" fill="none" stroke="#c98c68" stroke-width="1"/>
<path d="M356 520 C358 522 361 522.5 364 521.5" fill="none" stroke="#d39a76" stroke-width="0.8"/>
<!-- face -->
<path d="M339 462 C342 455 346 449 350.7 444.7 L353 443 C354 447 354.5 451 354.5 455 C355 458 355.2 461 354.8 462.9 C353.5 464 352 464.5 351.5 465 C351.8 467 351 469 350.1 470.5 C349.5 473 349 475.5 348.3 477.5 C345 479.5 342 480.5 339 481 C335 481 331 480.5 327.2 479.9 C326 476 330 471 334 467 Z" fill="#e7b590"/>
<path d="M334.2 461.1 C337 460 339 463 339 467 C339 470 338 471.5 336 471.7 C332 473 328 477 326 479 C325 474 328 468 332 463 Z" fill="#cd8f6c"/>
<path d="M340 470 C344 472 347 475 348.3 477.5 C345 479.5 342 480.5 339 481 C337 478 338 473 340 470 Z" fill="#d9a17e"/>
<!-- hair -->
<path d="M303.1 454 C304 450 305 446.5 306 443.5 C308 439.5 310.5 437 313.1 435.3 C316 433 319 431.5 322.5 430.6 C326 430 330 430.5 334.2 431.7 C338 433 342 434.5 346 436.4 C349 438 351.5 440 353 442.3 L350.7 444.7 C349.5 446.5 348.5 448 347.1 449.4 C345.5 452 344 455 342.5 457.6 C341.5 459.5 340.5 461 339 462.3 C337 461.5 335.5 461 334.2 461.1 C333 464 332.5 467 331.9 469.3 C329.5 471.5 327 473.5 324.8 475.2 C321.5 476 318.5 476 315.4 475.2 C313 474 310.5 472.5 308.4 470.5 C306.5 469 305 467 303.7 464.6 C303 461 302.8 457.5 303.1 454 Z" fill="#9a6844"/>
<path d="M312 437 C320 433 330 432 338 434 C344 436 349 439 352 442 C345 441 337 441 330 443 C322 445 314 449 306 452 C307 446 309 441 312 437 Z" fill="#bf8f67"/>
<path d="M318 441 C326 438 336 437 344 439 C336 441 328 444 320 447 Z" fill="#d4a77f"/>
<path d="M308 452 C316 448 326 445 336 445 C328 448 320 452 312 457 Z" fill="#c49a74"/>
<path d="M305 462 C311 458 318 455 326 453 C322 458 318 463 316 468 C312 469 308 467 305 465 Z" fill="#7a4a2e"/>
<path d="M322 455 C328 452 334 450 340 450 C336 454 333 458 331 462 C328 463 325 463 322 462 Z" fill="#a5714d"/>
<path d="M330 449 C336 447 342 447 347 449 C344 453 342 457 339 462 C337 461 335 461 334 461 C333 456 332 452 330 449 Z" fill="#a06e4c"/>
<path d="M316 471 C321 469 327 467 331 465 L331.9 469.3 C329.5 471.5 327 473.5 324.8 475.2 C321.5 476 318.5 476 315.4 475.2 Z" fill="#6a3c26"/>
</svg>

<div id="texts">
<div class="t" style="left:43.3px;top:7.8px;font-size:16px;font-weight:normal;color:#eeeeee;transform:scaleX(0.86)">File</div>
<div class="t" style="left:80.9px;top:7.8px;font-size:16px;font-weight:normal;color:#eeeeee;transform:scaleX(0.9)">Edit</div>
<div class="t" style="left:120.7px;top:7.8px;font-size:16px;font-weight:normal;color:#eeeeee;transform:scaleX(0.928)">Image</div>
<div class="t" style="left:176.7px;top:7.8px;font-size:16px;font-weight:normal;color:#eeeeee;transform:scaleX(0.882)">Layer</div>
<div class="t" style="left:227.5px;top:7.8px;font-size:16px;font-weight:normal;color:#eeeeee;transform:scaleX(0.882)">Type</div>
<div class="t" style="left:272.7px;top:7.8px;font-size:16px;font-weight:normal;color:#eeeeee;transform:scaleX(0.882)">Select</div>
<div class="t" style="left:326.4px;top:7.8px;font-size:16px;font-weight:normal;color:#eeeeee;transform:scaleX(0.923)">Filter</div>
<div class="t" style="left:375.2px;top:7.8px;font-size:16px;font-weight:normal;color:#eeeeee;transform:scaleX(0.88)">View</div>
<div class="t" style="left:420.4px;top:7.8px;font-size:16px;font-weight:normal;color:#eeeeee;transform:scaleX(0.92)">Plugins</div>
<div class="t" style="left:483.5px;top:7.8px;font-size:16px;font-weight:normal;color:#eeeeee;transform:scaleX(0.953)">Window</div>
<div class="t" style="left:553.1px;top:7.8px;font-size:16px;font-weight:normal;color:#eeeeee;transform:scaleX(0.944)">Help</div>
<div class="t" style="left:157.1px;top:50.5px;font-size:13px;font-weight:normal;color:#eeeeee;transform:scaleX(0.953)">Auto-Select:</div>
<div class="t" style="left:252.6px;top:52.6px;font-size:13px;font-weight:normal;color:#eeeeee;transform:scaleX(0.941)">Layer</div>
<div class="t" style="left:350.4px;top:50.3px;font-size:13px;font-weight:normal;color:#eeeeee;transform:scaleX(0.953)">Show Transform Controls</div>
<div class="t" style="left:65.2px;top:89.3px;font-size:14px;font-weight:bold;color:#eeeeee;transform:scaleX(0.989)">Untitled-1 @ 19,7% (Layer 1, RGB/8) *</div>
<div class="t" style="left:58.6px;top:1002.0px;font-size:15.5px;font-weight:normal;color:#e6e6e6;transform:scaleX(1.0)">19.7%</div>
<div class="t" style="left:146.0px;top:1004.8px;font-size:12px;font-weight:normal;color:#c4c4c4;transform:scaleX(0.973)">4961 px x 4961 px (300 ppi)</div>
<div class="t" style="left:372.3px;top:966.8px;font-size:13.5px;font-weight:normal;color:#eeeeee;transform:scaleX(0.978)">Select subject</div>
<div class="t" style="left:516.4px;top:966.8px;font-size:13.5px;font-weight:normal;color:#eeeeee;transform:scaleX(1.018)">Remove background</div>
<div class="t" style="left:702.4px;top:966.8px;font-size:13.5px;font-weight:normal;color:#eeeeee;transform:scaleX(1.017)">Adjust colors</div>
</div>

</body></html>
